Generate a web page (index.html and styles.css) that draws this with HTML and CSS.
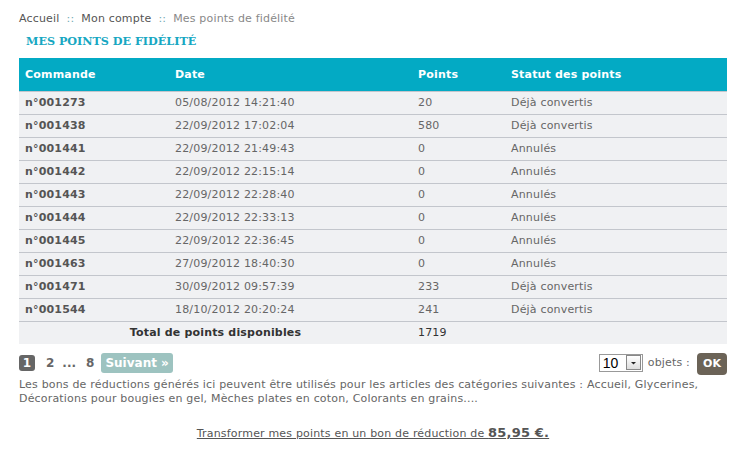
FILE: index.html
```html
<!DOCTYPE html>
<html lang="fr">
<head>
<meta charset="utf-8">
<title>Mes points de fidélité</title>
<link rel="stylesheet" href="styles.css">
</head>
<body>
<div class="page">
  <div class="breadcrumb">
    <a href="#">Accueil</a><span class="sep">::</span><a href="#">Mon compte</a><span class="sep">::</span><span class="current">Mes points de fidélité</span>
  </div>
  <h1 class="title">Mes points de fidélité</h1>
  <table class="points">
    <thead>
      <tr><th class="c1">Commande</th><th class="c2">Date</th><th class="c3">Points</th><th class="c4">Statut des points</th></tr>
    </thead>
    <tbody>
      <tr><td class="ref">n°001273</td><td>05/08/2012 14:21:40</td><td>20</td><td>Déjà convertis</td></tr>
      <tr><td class="ref">n°001438</td><td>22/09/2012 17:02:04</td><td>580</td><td>Déjà convertis</td></tr>
      <tr><td class="ref">n°001441</td><td>22/09/2012 21:49:43</td><td>0</td><td>Annulés</td></tr>
      <tr><td class="ref">n°001442</td><td>22/09/2012 22:15:14</td><td>0</td><td>Annulés</td></tr>
      <tr><td class="ref">n°001443</td><td>22/09/2012 22:28:40</td><td>0</td><td>Annulés</td></tr>
      <tr><td class="ref">n°001444</td><td>22/09/2012 22:33:13</td><td>0</td><td>Annulés</td></tr>
      <tr><td class="ref">n°001445</td><td>22/09/2012 22:36:45</td><td>0</td><td>Annulés</td></tr>
      <tr><td class="ref">n°001463</td><td>27/09/2012 18:40:30</td><td>0</td><td>Annulés</td></tr>
      <tr><td class="ref">n°001471</td><td>30/09/2012 09:57:39</td><td>233</td><td>Déjà convertis</td></tr>
      <tr><td class="ref">n°001544</td><td>18/10/2012 20:20:24</td><td>241</td><td>Déjà convertis</td></tr>
    </tbody>
    <tfoot>
      <tr><td colspan="2" class="total-label">Total de points disponibles</td><td class="total-val">1719</td><td></td></tr>
    </tfoot>
  </table>
  <div class="pager">
    <div class="pages">
      <span class="pg active">1</span>
      <a class="pg p2" href="#">2</a>
      <span class="dots">...</span>
      <a class="pg p8" href="#">8</a>
      <a class="next" href="#">Suivant »</a>
    </div>
    <div class="perpage">
      <span class="select"><span class="val">10</span><span class="arrow"><svg width="9" height="9" viewBox="0 0 9 9"><path d="M2 4h5L4.5 6.5z" fill="#222"/></svg></span></span>
      <span class="objets">objets :</span>
      <button class="ok">OK</button>
    </div>
  </div>
  <p class="info">Les bons de réductions générés ici peuvent être utilisés pour les articles des catégories suivantes : Accueil, Glycerines, Décorations pour bougies en gel, Mèches plates en coton, Colorants en grains....</p>
  <p class="convert"><a href="#">Transformer mes points en un bon de réduction de <strong>85,95 €.</strong></a></p>
</div>
</body>
</html>
```
FILE: styles.css
```css
html, body {
  margin: 0;
  padding: 0;
  background: #fff;
}
body {
  font-family: "DejaVu Sans", Verdana, sans-serif;
  font-size: 11px;
  letter-spacing: 0.18px;
  color: #666;
}
.page {
  width: 708px;
  padding: 12px 13px 0 19px;
}
.breadcrumb {
  line-height: 14px;
  color: #555;
}
.breadcrumb a {
  color: #555;
  text-decoration: none;
}
.breadcrumb .sep {
  color: #6fa9b3;
  margin: 0 7px;
}
.breadcrumb .current {
  color: #888;
}
.title {
  margin: 7px 0 0 7px;
  font-family: "DejaVu Serif", "Liberation Serif", serif;
  font-size: 11.2px;
  letter-spacing: 0;
  font-weight: bold;
  text-transform: uppercase;
  color: #17a7c2;
  line-height: 16px;
  height: 17px;
}
.points {
  margin-top: 8px;
  width: 708px;
  border-collapse: collapse;
  table-layout: fixed;
}
.points th {
  background: #03aac4;
  color: #fff;
  font-weight: bold;
  text-align: left;
  height: 33px;
  padding: 0 6px;
  box-sizing: border-box;
  border-bottom: 1px solid #c3c6cc;
}
.c1 { width: 150px; }
.c2 { width: 243px; }
.c3 { width: 93px; }
.points td {
  background: #f0f1f3;
  height: 22px;
  padding: 0 6px;
  border-bottom: 1px solid #c3c6cc;
  color: #666;
}
.points td.ref {
  font-weight: bold;
  color: #555;
}
.points tfoot td {
  border-bottom: none;
  height: 22px;
}
.points td.total-label {
  text-align: center;
  font-weight: bold;
  color: #333;
}
.points td.total-val {
  color: #333;
}
.pager {
  display: flex;
  justify-content: space-between;
  align-items: center;
  margin-top: 8px;
  height: 22px;
}
.pages {
  display: flex;
  align-items: center;
  font-weight: bold;
  font-size: 12px;
  letter-spacing: 0;
}
.pg {
  color: #666;
  text-decoration: none;
}
.pg.active {
  background: #666;
  color: #fff;
  border-radius: 3px;
  width: 16px;
  height: 16px;
  line-height: 16px;
  text-align: center;
  margin-right: 11px;
}
.p2 {
  margin-right: 8px;
}
.dots {
  margin-right: 10px;
  color: #666;
}
.p8 {
  margin-right: 7px;
}
.next {
  background: #9dc3c0;
  color: #fff;
  text-decoration: none;
  border-radius: 3px;
  padding: 3px 4px;
}
.perpage {
  display: flex;
  align-items: center;
}
.select {
  display: flex;
  align-items: center;
  border: 1px solid #999;
  height: 16px;
  width: 42px;
  box-sizing: content-box;
  background: #fff;
  font-family: "Liberation Sans", Arial, sans-serif;
  font-size: 14px;
  letter-spacing: 0;
  color: #000;
}
.select .val {
  flex: 1;
  padding-left: 3px;
  line-height: 16px;
}
.select .arrow {
  width: 15px;
  height: 15px;
  margin-right: 1px;
  border: 1px solid #888;
  box-sizing: border-box;
  background: linear-gradient(#fff, #ddd);
  display: flex;
  align-items: center;
  justify-content: center;
}
.objets {
  margin-left: 5px;
  color: #666;
}
.ok {
  margin-left: 7px;
  background: #6b6357;
  color: #fff;
  border: none;
  border-radius: 4px;
  font-family: "DejaVu Sans", Verdana, sans-serif;
  font-weight: bold;
  font-size: 11px;
  width: 30px;
  height: 22px;
  padding: 0;
  margin-top: 2px;
}
.info {
  margin: 4px 0 0;
  line-height: 14px;
  color: #666;
}
.convert {
  margin: 19px 0 0;
  text-align: center;
}
.convert a {
  color: #555;
  text-decoration: underline;
}
.convert strong {
  font-size: 13px;
}
```
